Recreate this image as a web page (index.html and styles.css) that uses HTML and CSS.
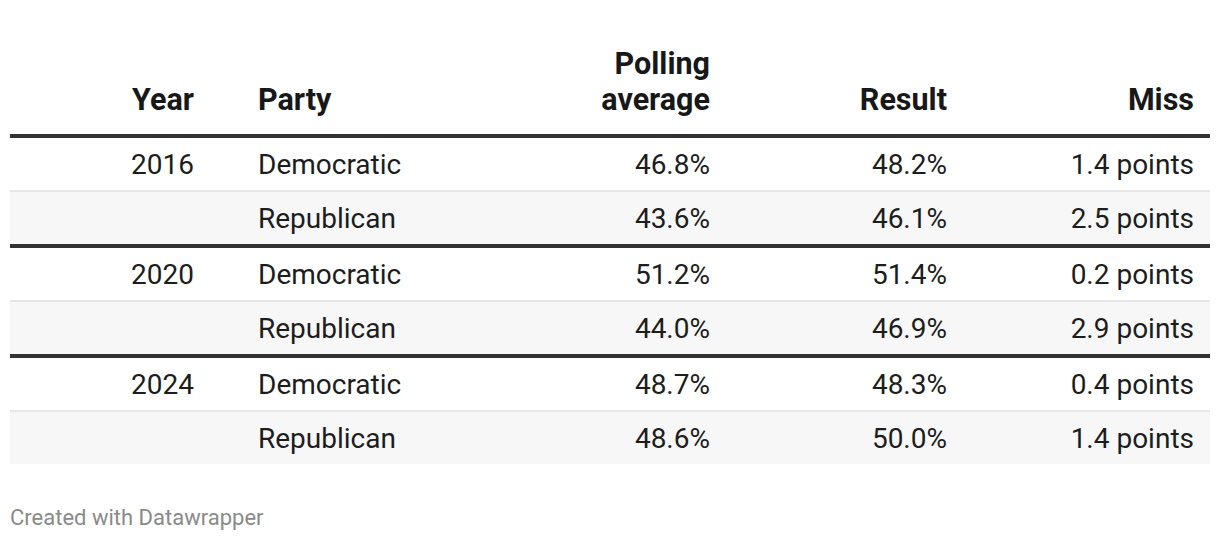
FILE: index.html
```html
<!DOCTYPE html>
<html lang="en">
<head>
<meta charset="utf-8">
<title>Polling misses</title>
<link rel="stylesheet" href="styles.css">
</head>
<body>
<div class="chart">
  <table class="dw-table">
    <colgroup>
      <col class="c-year">
      <col class="c-party">
      <col class="c-poll">
      <col class="c-result">
      <col class="c-miss">
    </colgroup>
    <thead>
      <tr>
        <th class="num year">Year</th>
        <th class="txt party">Party</th>
        <th class="num">Polling<br>average</th>
        <th class="num">Result</th>
        <th class="num">Miss</th>
      </tr>
    </thead>
    <tbody>
      <tr class="odd">
        <td class="num year">2016</td><td class="txt party">Democratic</td><td class="num">46.8%</td><td class="num">48.2%</td><td class="num">1.4 points</td>
      </tr>
      <tr class="even group-end">
        <td class="num year"></td><td class="txt party">Republican</td><td class="num">43.6%</td><td class="num">46.1%</td><td class="num">2.5 points</td>
      </tr>
      <tr class="odd">
        <td class="num year">2020</td><td class="txt party">Democratic</td><td class="num">51.2%</td><td class="num">51.4%</td><td class="num">0.2 points</td>
      </tr>
      <tr class="even group-end">
        <td class="num year"></td><td class="txt party">Republican</td><td class="num">44.0%</td><td class="num">46.9%</td><td class="num">2.9 points</td>
      </tr>
      <tr class="odd">
        <td class="num year">2024</td><td class="txt party">Democratic</td><td class="num">48.7%</td><td class="num">48.3%</td><td class="num">0.4 points</td>
      </tr>
      <tr class="even last">
        <td class="num year"></td><td class="txt party">Republican</td><td class="num">48.6%</td><td class="num">50.0%</td><td class="num">1.4 points</td>
      </tr>
    </tbody>
  </table>
  <div class="footer">Created with Datawrapper</div>
</div>
</body>
</html>
```

FILE: styles.css
```css
html, body {
  margin: 0;
  padding: 0;
  background: #ffffff;
}

body {
  font-family: Roboto, "Liberation Sans", Arial, sans-serif;
  color: #1d1d1d;
}

.chart {
  padding: 30px 10px 0 10px;
}

.dw-table {
  width: 1200px;
  border-collapse: collapse;
  table-layout: fixed;
  font-size: 28px;
  line-height: 36px;
}

.c-year { width: 232px; }
.c-party { width: 258px; }
.c-poll { width: 226px; }
.c-result { width: 237px; }
.c-miss { width: 247px; }

th, td {
  padding: 8px 16px;
  white-space: nowrap;
}

th {
  font-weight: 700;
  font-size: 30.5px;
  color: #181818;
  vertical-align: bottom;
  padding-top: 16px;
  padding-bottom: 16px;
  border-bottom: 4px solid #333333;
}

td {
  padding-top: 9px;
  padding-bottom: 7px;
}

.num { text-align: right; }
.txt { text-align: left; }

.year { padding-right: 48px; }
.party { padding-left: 16px; }

tbody tr.odd { background: #ffffff; }
tbody tr.even { background: #f7f7f7; }

tbody tr.odd td {
  border-bottom: 2px solid #e6e6e6;
}

tbody tr.group-end td {
  border-bottom: 4px solid #333333;
}

tbody tr.last td {
  border-bottom: none;
}

.footer {
  margin-top: 40px;
  font-size: 22px;
  line-height: 28px;
  color: #8a8a8a;
}
```
